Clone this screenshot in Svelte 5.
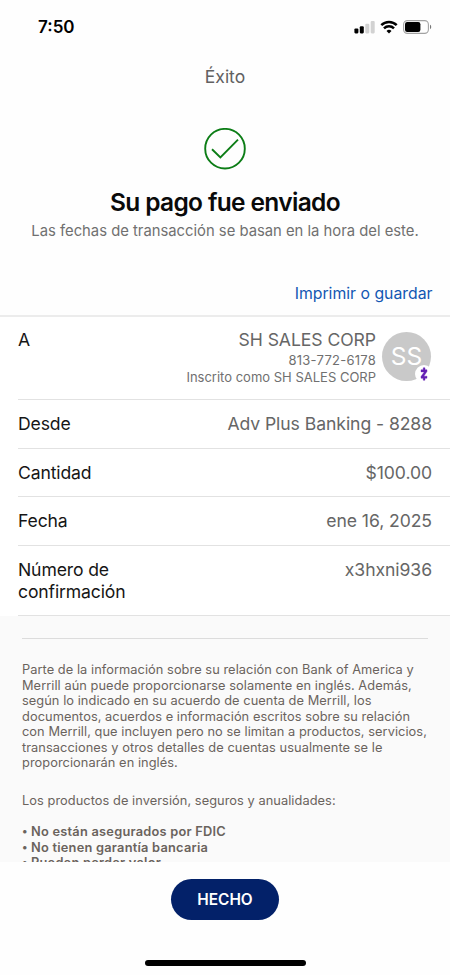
<script lang="ts">
  type DetailRow = { label: string; value: string; tall?: boolean };

  const recipient = {
    name: 'SH SALES CORP',
    phone: '813-772-6178',
    enrolledAs: 'Inscrito como SH SALES CORP',
    initials: 'SS'
  };

  const rows: DetailRow[] = [
    { label: 'Desde', value: 'Adv Plus Banking - 8288' },
    { label: 'Cantidad', value: '$100.00' },
    { label: 'Fecha', value: 'ene 16, 2025' },
    { label: 'Número de confirmación', value: 'x3hxni936', tall: true }
  ];

  const disclosure = [
    'Parte de la información sobre su relación con Bank of America y',
    'Merrill aún puede proporcionarse solamente en inglés. Además,',
    'según lo indicado en su acuerdo de cuenta de Merrill, los',
    'documentos, acuerdos e información escritos sobre su relación',
    'con Merrill, que incluyen pero no se limitan a productos, servicios,',
    'transacciones y otros detalles de cuentas usualmente se le',
    'proporcionarán en inglés.'
  ];

  const warnings = ['No están asegurados por FDIC', 'No tienen garantía bancaria', 'Pueden perder valor'];
</script>

<div class="screen">
  <header class="status-bar">
    <span class="clock">7:50</span>
    <div class="status-icons">
      <svg width="21" height="14" viewBox="0 0 21 14">
        <rect x="0.4" y="8.4" width="4" height="5" rx="1.1" />
        <rect x="5.8" y="6.2" width="4" height="7.2" rx="1.1" />
        <rect x="11.3" y="3.7" width="4" height="9.7" rx="1.1" fill="#d2d2d2" />
        <rect x="16.7" y="1" width="4" height="12.4" rx="1.1" fill="#d2d2d2" />
      </svg>
      <svg width="18" height="14" viewBox="0 0 18 14">
        <g fill="none" stroke="#000" stroke-width="2.5">
          <path d="M1.3 5.2a10.9 10.9 0 0 1 15.4 0" />
          <path d="M4 8.3a7.1 7.1 0 0 1 10 0" />
        </g>
        <path d="M9 13.6l-2.5-2.7a3.7 3.7 0 0 1 5 0z" />
      </svg>
      <svg width="29" height="14" viewBox="0 0 29 14">
        <rect x="0.6" y="0.6" width="24.8" height="12.8" rx="3.8" fill="none" stroke="#a2a2a2" stroke-width="1.1" />
        <rect x="2" y="2.1" width="15.4" height="9.8" rx="2.2" />
        <path d="M27 4.8c1.6.6 1.6 3.8 0 4.4z" fill="#777" />
      </svg>
    </div>
  </header>

  <div class="nav-title">Éxito</div>

  <section class="summary">
    <svg class="check" width="42" height="42" viewBox="0 0 42 42" fill="none" stroke="#0c7d16" stroke-width="1.9">
      <circle cx="21" cy="20.7" r="19.8" />
      <path d="M8 21.2l8.4 8.3L34 11.7" />
    </svg>
    <h1>Su pago fue enviado</h1>
    <p>Las fechas de transacción se basan en la hora del este.</p>
  </section>

  <div class="actions">
    <button class="link-btn" type="button">Imprimir o guardar</button>
  </div>

  <section class="details">
    <div class="row recipient">
      <span class="label">A</span>
      <div class="recipient-info">
        <span class="value">{recipient.name}</span>
        <span class="phone">{recipient.phone}</span>
        <span class="enrolled">{recipient.enrolledAs}</span>
      </div>
      <div class="avatar">
        <span>{recipient.initials}</span>
        <svg class="zelle" width="18" height="18" viewBox="0 0 18 18">
          <circle cx="9" cy="9" r="9" fill="#fff" />
          <path d="M6 4.8h6v1.7L8.8 11.2H12v2H6v-1.7l3.2-4.6H6zM8.2 2.8h1.8v3H8.2zM8.2 12.2h1.8v3H8.2z" fill="#6420b4" stroke="#6420b4" stroke-width="0.4" />
        </svg>
      </div>
    </div>
    {#each rows as row}
      <div class="row" class:tall={row.tall}>
        <span class="label">{row.label}</span>
        <span class="value">{row.value}</span>
      </div>
    {/each}
  </section>

  <section class="legal">
    <hr />
    <p>
      {#each disclosure as line}
        <span class="line">{line}</span>
      {/each}
    </p>
    <p class="products">Los productos de inversión, seguros y anualidades:</p>
    <ul>
      {#each warnings as warning}
        <li><i>•</i>{warning}</li>
      {/each}
    </ul>
  </section>

  <footer>
    <button class="done-btn" type="button">HECHO</button>
    <div class="home-bar"></div>
  </footer>
</div>

<style>
  :global(body) { margin: 0; background: #fff; }
  .screen {
    width: 450px;
    height: 975px;
    display: flex;
    flex-direction: column;
    overflow: hidden;
    background: #fefefe;
    color: #1c1c1e;
    font-family: Inter, 'Liberation Sans', sans-serif;
  }
  .status-bar { display: flex; justify-content: space-between; height: 54px; box-sizing: border-box; padding: 17px 18px 0 38px; }
  .clock { font-size: 17px; line-height: 21px; font-weight: 600; color: #000; }
  .status-icons { display: flex; gap: 5px; padding-top: 3px; }
  .nav-title { height: 44px; line-height: 45px; text-align: center; font-size: 17.5px; color: #616161; }
  .summary { display: flex; flex-direction: column; align-items: center; padding-top: 30px; }
  .check { display: block; }
  h1 { margin: 16px 0 0; font-size: 24.5px; line-height: 32px; font-weight: 600; color: #0a0a0a; white-space: nowrap; letter-spacing: -0.66px; }
  .summary p { margin: 2px 0 0; font-size: 14.8px; line-height: 22px; color: #707070; white-space: nowrap; }
  .actions { display: flex; justify-content: flex-end; padding: 41px 17.5px 10px; }
  .link-btn { border: 0; padding: 0; background: none; font: inherit; font-size: 15.8px; line-height: 22px; color: #1257b3; }
  .details { border-top: 2px solid #ececec; background: #fff; }
  .row {
    display: flex;
    justify-content: space-between;
    height: 48.6px;
    box-sizing: border-box;
    margin-left: 18px;
    padding: 13px 18px 0 0;
    border-bottom: 1px solid #e2e2e2;
    font-size: 18px;
    line-height: 22px;
  }
  .row.recipient { height: 83px; padding-top: 12px; padding-right: 19px; }
  .row.tall { height: 70.5px; }
  .label { max-width: 150px; color: #161616; font-size: 17.6px; letter-spacing: -0.14px; }
  .value { color: #666; font-size: 17.6px; letter-spacing: -0.07px; }
  .recipient-info { display: flex; flex: 1; flex-direction: column; align-items: flex-end; margin-right: 6px; color: #707070; }
  .phone, .enrolled { font-size: 13px; line-height: 17px; }
  .phone { margin-top: 1px; letter-spacing: 0.25px; }
  .avatar {
    position: relative;
    width: 49px;
    height: 49px;
    margin-top: 3px;
    border-radius: 50%;
    background: #c9c9c9;
    color: #fff;
    font-size: 24.5px;
    line-height: 49px;
    text-align: center;
  }
  .zelle { position: absolute; right: -2px; bottom: -2px; }
  .legal { flex: 1; min-height: 0; overflow: hidden; padding: 22px 22px 0; background: #fafafa; color: #6a635d; font-size: 12.8px; line-height: 15.5px; letter-spacing: 0.06px; }
  hr { margin: 0; border: 0; border-top: 1px solid #dcdcdc; }
  .legal p { margin: 22.8px 0 0; white-space: nowrap; }
  .line { display: block; }
  .legal .products { margin-top: 22px; }
  ul { margin: 16px 0 0; padding: 0; list-style: none; font-weight: 600; white-space: nowrap; letter-spacing: 0.24px; }
  li { display: flex; }
  i { width: 9px; font-size: 11px; font-style: normal; }
  footer { display: flex; flex-direction: column; align-items: center; height: 113px; flex: none; background: #fefefe; }
  .done-btn { width: 108px; height: 41px; margin-top: 17px; padding: 0; border: 0; border-radius: 21px; background: #032169; color: #fff; font: inherit; font-size: 15.4px; font-weight: 600; }
  .home-bar { width: 161px; height: 6px; margin-top: 40px; border-radius: 3px; background: #000; }
</style>
